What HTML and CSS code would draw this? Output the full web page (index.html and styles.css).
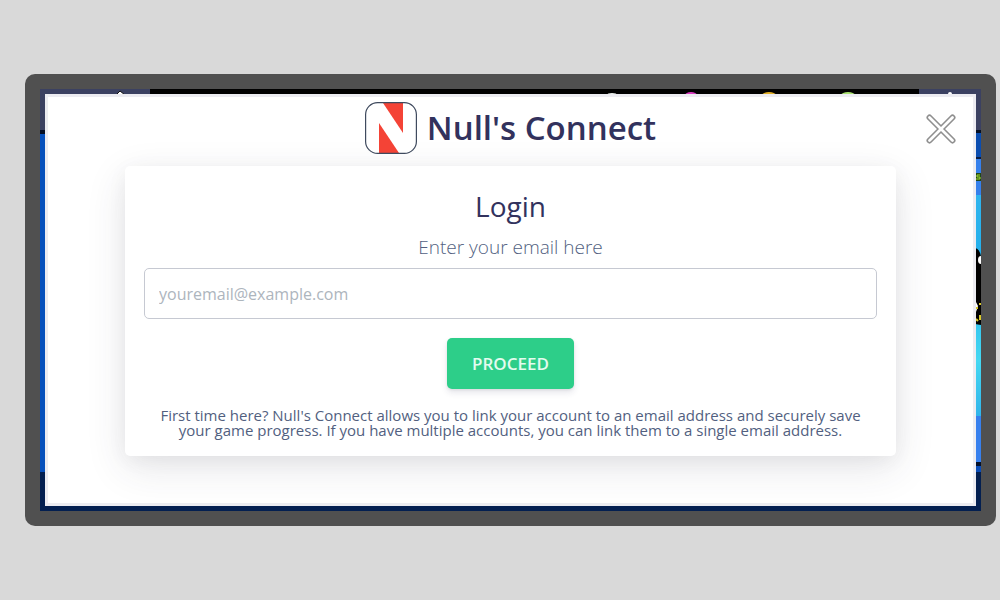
FILE: index.html
```html
<!DOCTYPE html>
<html lang="en">
<head>
<meta charset="UTF-8" />
<meta name="viewport" content="width=device-width, initial-scale=1" />
<title>Null's Connect</title>
<link rel="stylesheet" href="styles.css">
</head>
<body>

<div class="device">
<div class="screen">

<!-- Game lobby behind the popup -->
<svg class="lobby" viewBox="0 0 941 422" preserveAspectRatio="none" aria-hidden="true">
<defs>
<linearGradient id="sky" x1="0" y1="0" x2="0" y2="1">
<stop offset="0" stop-color="#2fb4ee" />
<stop offset="0.35" stop-color="#20aeea" />
<stop offset="0.75" stop-color="#45d8f2" />
<stop offset="1" stop-color="#30b4ea" />
</linearGradient>
</defs>
<rect width="941" height="422" fill="#0650bc" />
<rect width="941" height="42" fill="#3b4161" />
<rect x="110" width="769" height="10" fill="#000" />
<rect y="41" width="20" height="4" fill="#050f24" />
<rect y="383" width="941" height="39" fill="#031f50" />
<path d="M76 6L80 2L85 6Z" fill="#fff" stroke="#111" />
<ellipse cx="572" cy="6" rx="5" ry="2" fill="#e8eee8" />
<ellipse cx="651" cy="6" rx="6" ry="3" fill="#d83cc0" />
<ellipse cx="729" cy="6" rx="7" ry="3" fill="#e0ae28" />
<ellipse cx="808" cy="6" rx="7" ry="3" fill="#a8e070" />
<circle cx="910" cy="5" r="2" fill="#fff" />
<rect x="930" y="41" width="11" height="3" fill="#050f24" />
<rect x="930" y="44" width="11" height="24" fill="#0a4db0" />
<rect x="930" y="68" width="11" height="2" fill="#0a1c40" />
<rect x="930" y="70" width="11" height="36" fill="#3580ec" />
<rect x="930" y="84" width="11" height="8" fill="#20451a" />
<path d="M940 86H937V88H940V90H936" fill="none" stroke="#a4e02c" />
<rect x="930" y="106" width="11" height="221" fill="url(#sky)" />
<path d="M935 159Q940 160 941 168V208V236L935 235Z" fill="#000" />
<ellipse cx="941" cy="171" rx="3" ry="4" fill="#fff" />
<path d="M935 211L938 217L936 223Z" fill="#fff" />
<path d="M936 219H938M939 215H941M936 230L938 232M940 226V231" stroke="#d8c828" stroke-width="2" />
<rect x="930" y="327" width="11" height="46" fill="#3780ee" />
<rect x="930" y="373" width="11" height="4" fill="#04102a" />
<rect x="930" y="377" width="11" height="6" fill="#0a4db8" />
</svg>

<main class="popup">
<header class="popup-header">
<svg class="logo" viewBox="0 0 52 52" aria-hidden="true">
<rect x="0.6" y="0.6" width="50.8" height="50.8" rx="12" fill="#fff" />
<path d="M18 1H38V31Z" fill="#f44336" />
<path d="M14 21L34 51H14Z" fill="#f44336" />
<rect x="0.6" y="0.6" width="50.8" height="50.8" rx="12" fill="none" stroke="#3f4a5e" stroke-width="1.2" />
</svg>
<h1>Null's Connect</h1>
<button class="close" type="button" aria-label="Close">
<svg viewBox="0 0 30 30" aria-hidden="true">
<path d="M3.5 3.5L26.5 26.5M26.5 3.5L3.5 26.5" stroke="#8f8f8f" stroke-width="6" stroke-linecap="round" />
<path d="M3.5 3.5L26.5 26.5M26.5 3.5L3.5 26.5" stroke="#fff" stroke-width="2.8" stroke-linecap="round" />
</svg>
</button>
</header>

<form class="card">
<h2>Login</h2>
<label for="email">Enter your email here</label>
<input type="email" id="email" placeholder="youremail@example.com" />
<button class="proceed" type="submit">PROCEED</button>
<p>First time here? Null's Connect allows you to link your account to an email address and securely save your game progress. If you have multiple accounts, you can link them to a single email address.</p>
</form>
</main>

</div>
</div>

</body>
</html>
```

FILE: styles.css
```css
* {
  box-sizing: border-box;
}
body {
  margin: 0;
  padding: 74px 4px 74px 25px;
  background: #d9d9d9;
  font-family: "Open Sans", "Noto Sans", sans-serif;
  color: #525f7f;
}
.device {
  padding: 15px;
  background: #505050;
  border-radius: 10px;
}
.screen {
  position: relative;
  padding: 5px;
}
.lobby {
  position: absolute;
  top: 0;
  left: 0;
  width: 100%;
  height: 100%;
}
.popup {
  position: relative;
  padding: 5px 77px 47px;
  background: #fff;
  border: 3px solid #ececf1;
}
.popup-header {
  display: flex;
  justify-content: center;
  align-items: center;
  gap: 10px;
  margin-bottom: 12px;
}
.logo {
  width: 52px;
  height: 52px;
}
h1 {
  margin: 0;
  font-size: 33px;
  line-height: 52px;
  font-weight: 600;
  color: #32325d;
}
.close {
  position: absolute;
  top: 17px;
  right: 17px;
  width: 30px;
  height: 30px;
  padding: 0;
  border: none;
  background: none;
  cursor: pointer;
}
.close svg {
  display: block;
  width: 100%;
  height: 100%;
}
.card {
  display: flex;
  flex-direction: column;
  align-items: center;
  padding: 20px 19px 18px;
  background: #fff;
  border-radius: 5px;
  box-shadow: 0 12px 40px rgba(50, 50, 70, 0.12), 0 4px 20px rgba(0, 0, 0, 0.05);
  text-align: center;
}
h2 {
  margin: 0 0 7px;
  font-size: 28px;
  line-height: 40px;
  font-weight: 400;
  color: #32325d;
}
label {
  margin-bottom: 7px;
  font-size: 19px;
  line-height: 28px;
  font-weight: 300;
}
input {
  width: 100%;
  height: 51px;
  padding: 0 14px;
  border: 1px solid #c6c9d2;
  border-radius: 5px;
  background: #fff;
  font-family: inherit;
  font-size: 16px;
  color: #525f7f;
}
input::placeholder {
  color: #adb5bd;
}
.proceed {
  height: 51px;
  margin: 19px 0;
  padding: 0 25px;
  border: none;
  border-radius: 5px;
  background: #2dce89;
  box-shadow: 0 4px 6px rgba(50, 50, 93, 0.11), 0 1px 3px rgba(0, 0, 0, 0.08);
  font-family: inherit;
  font-size: 17px;
  font-weight: 600;
  color: #e4fbef;
  cursor: pointer;
}
.proceed:hover {
  background: #28bd7d;
}
p {
  margin: 0;
  font-size: 15px;
  line-height: 15px;
}
```
